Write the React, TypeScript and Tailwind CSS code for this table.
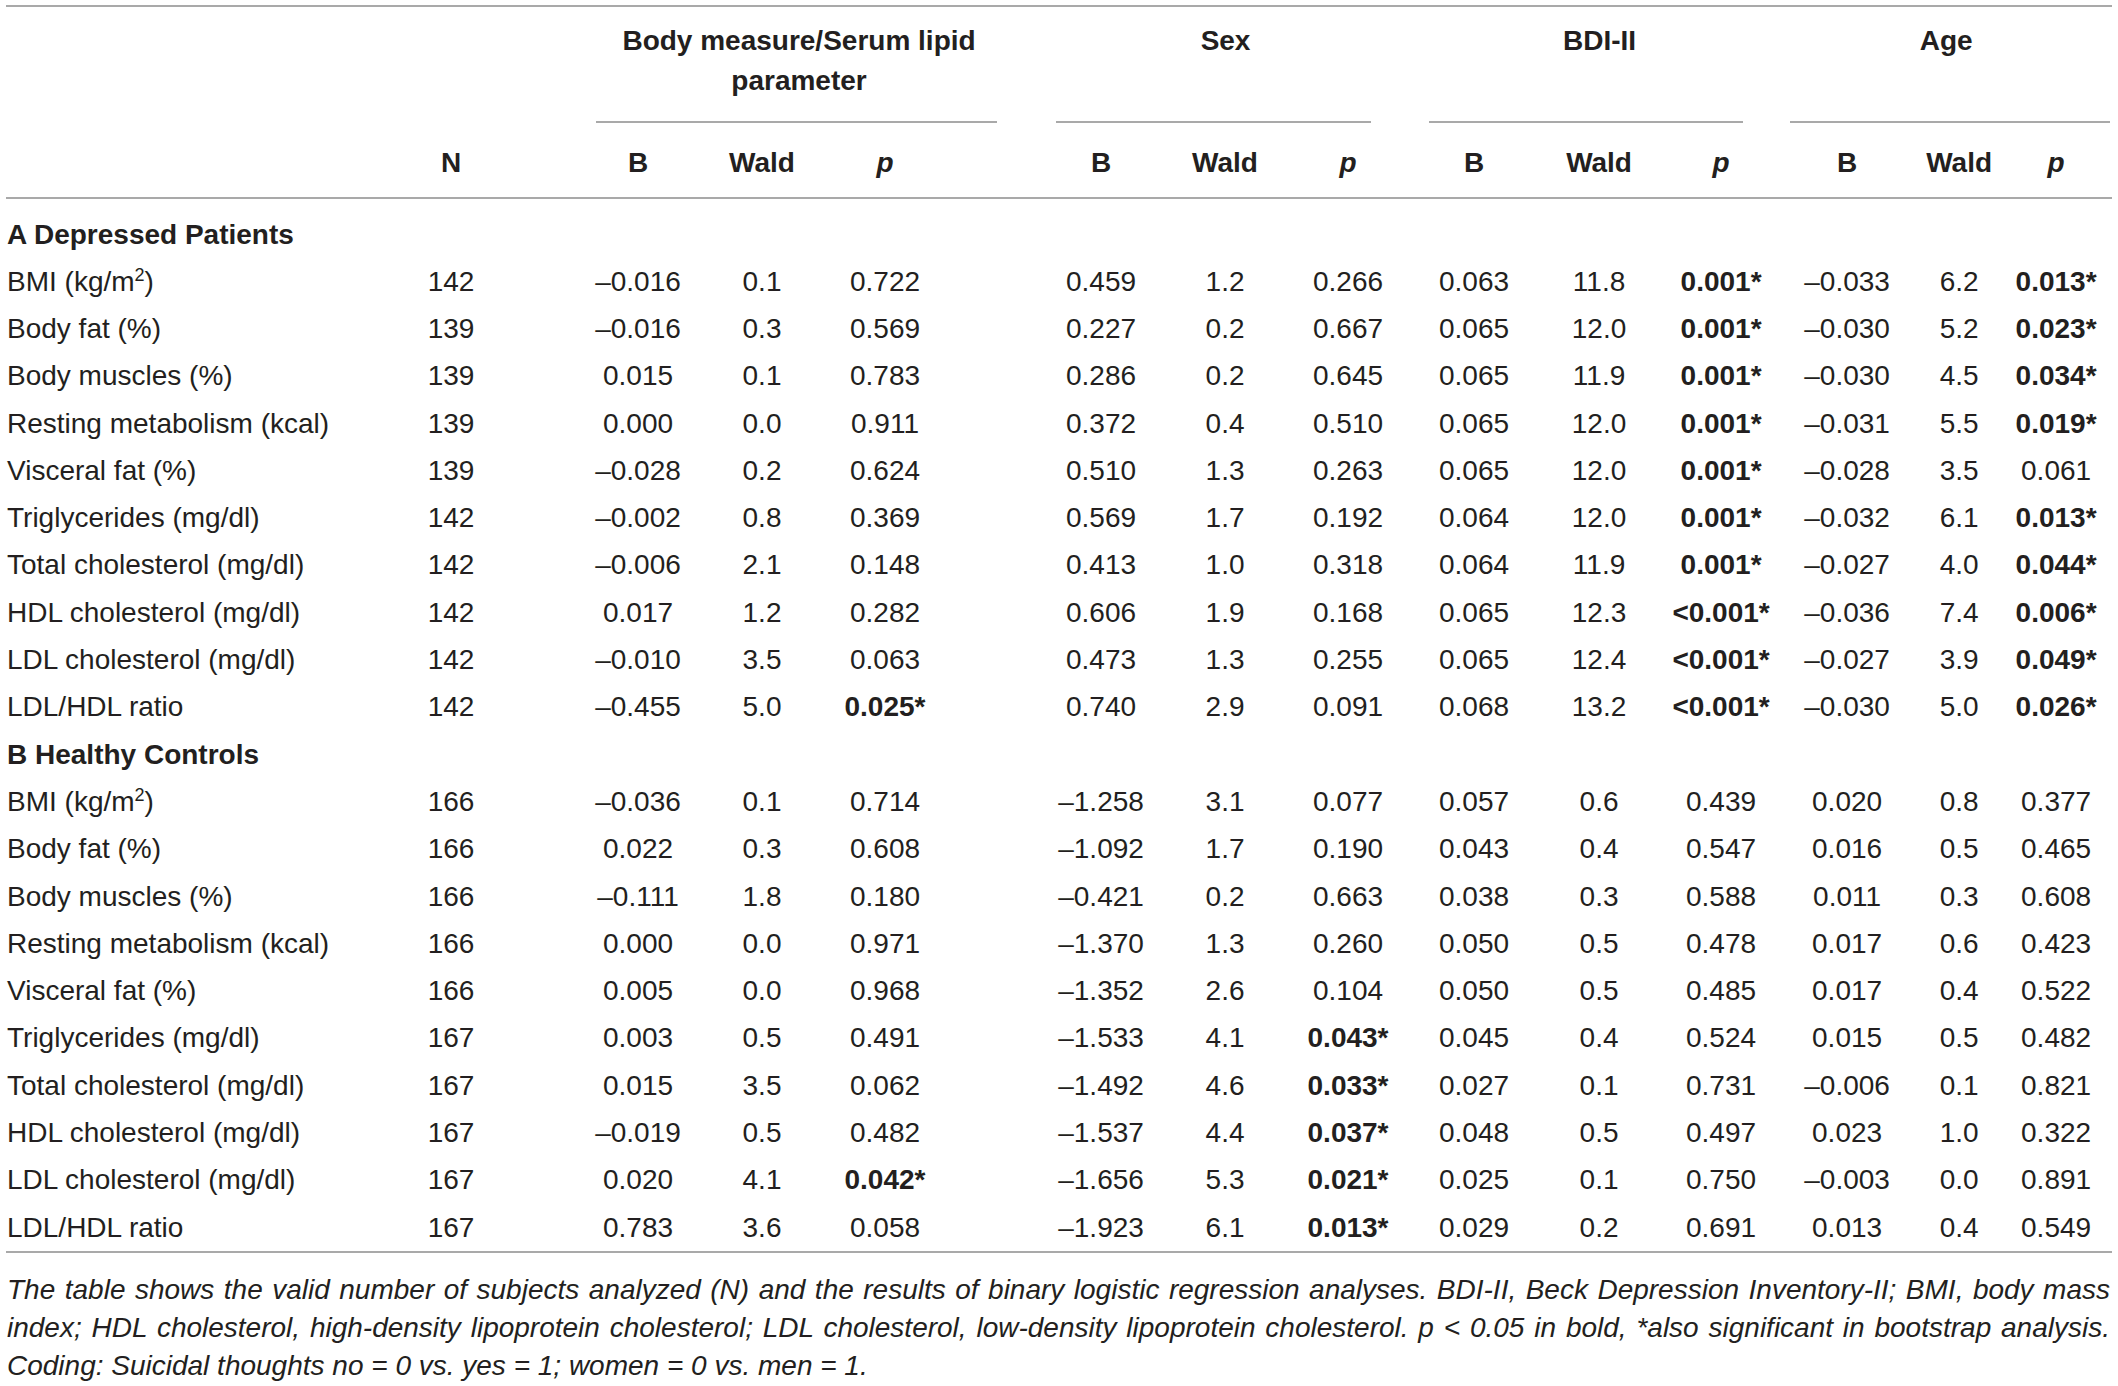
import React from 'react';

type Row = { label: React.ReactNode; n: string; v: string[] };

const bmi = (
  <>
    BMI (kg/m<sup className="text-[18px] -top-[10px]">2</sup>)
  </>
);

// "!" prefix marks a bold (significant) value
const groupA: Row[] = [
  { label: bmi, n: '142', v: ['–0.016', '0.1', '0.722', '0.459', '1.2', '0.266', '0.063', '11.8', '!0.001*', '–0.033', '6.2', '!0.013*'] },
  { label: 'Body fat (%)', n: '139', v: ['–0.016', '0.3', '0.569', '0.227', '0.2', '0.667', '0.065', '12.0', '!0.001*', '–0.030', '5.2', '!0.023*'] },
  { label: 'Body muscles (%)', n: '139', v: ['0.015', '0.1', '0.783', '0.286', '0.2', '0.645', '0.065', '11.9', '!0.001*', '–0.030', '4.5', '!0.034*'] },
  { label: 'Resting metabolism (kcal)', n: '139', v: ['0.000', '0.0', '0.911', '0.372', '0.4', '0.510', '0.065', '12.0', '!0.001*', '–0.031', '5.5', '!0.019*'] },
  { label: 'Visceral fat (%)', n: '139', v: ['–0.028', '0.2', '0.624', '0.510', '1.3', '0.263', '0.065', '12.0', '!0.001*', '–0.028', '3.5', '0.061'] },
  { label: 'Triglycerides (mg/dl)', n: '142', v: ['–0.002', '0.8', '0.369', '0.569', '1.7', '0.192', '0.064', '12.0', '!0.001*', '–0.032', '6.1', '!0.013*'] },
  { label: 'Total cholesterol (mg/dl)', n: '142', v: ['–0.006', '2.1', '0.148', '0.413', '1.0', '0.318', '0.064', '11.9', '!0.001*', '–0.027', '4.0', '!0.044*'] },
  { label: 'HDL cholesterol (mg/dl)', n: '142', v: ['0.017', '1.2', '0.282', '0.606', '1.9', '0.168', '0.065', '12.3', '!<0.001*', '–0.036', '7.4', '!0.006*'] },
  { label: 'LDL cholesterol (mg/dl)', n: '142', v: ['–0.010', '3.5', '0.063', '0.473', '1.3', '0.255', '0.065', '12.4', '!<0.001*', '–0.027', '3.9', '!0.049*'] },
  { label: 'LDL/HDL ratio', n: '142', v: ['–0.455', '5.0', '!0.025*', '0.740', '2.9', '0.091', '0.068', '13.2', '!<0.001*', '–0.030', '5.0', '!0.026*'] },
];

const groupB: Row[] = [
  { label: bmi, n: '166', v: ['–0.036', '0.1', '0.714', '–1.258', '3.1', '0.077', '0.057', '0.6', '0.439', '0.020', '0.8', '0.377'] },
  { label: 'Body fat (%)', n: '166', v: ['0.022', '0.3', '0.608', '–1.092', '1.7', '0.190', '0.043', '0.4', '0.547', '0.016', '0.5', '0.465'] },
  { label: 'Body muscles (%)', n: '166', v: ['–0.111', '1.8', '0.180', '–0.421', '0.2', '0.663', '0.038', '0.3', '0.588', '0.011', '0.3', '0.608'] },
  { label: 'Resting metabolism (kcal)', n: '166', v: ['0.000', '0.0', '0.971', '–1.370', '1.3', '0.260', '0.050', '0.5', '0.478', '0.017', '0.6', '0.423'] },
  { label: 'Visceral fat (%)', n: '166', v: ['0.005', '0.0', '0.968', '–1.352', '2.6', '0.104', '0.050', '0.5', '0.485', '0.017', '0.4', '0.522'] },
  { label: 'Triglycerides (mg/dl)', n: '167', v: ['0.003', '0.5', '0.491', '–1.533', '4.1', '!0.043*', '0.045', '0.4', '0.524', '0.015', '0.5', '0.482'] },
  { label: 'Total cholesterol (mg/dl)', n: '167', v: ['0.015', '3.5', '0.062', '–1.492', '4.6', '!0.033*', '0.027', '0.1', '0.731', '–0.006', '0.1', '0.821'] },
  { label: 'HDL cholesterol (mg/dl)', n: '167', v: ['–0.019', '0.5', '0.482', '–1.537', '4.4', '!0.037*', '0.048', '0.5', '0.497', '0.023', '1.0', '0.322'] },
  { label: 'LDL cholesterol (mg/dl)', n: '167', v: ['0.020', '4.1', '!0.042*', '–1.656', '5.3', '!0.021*', '0.025', '0.1', '0.750', '–0.003', '0.0', '0.891'] },
  { label: 'LDL/HDL ratio', n: '167', v: ['0.783', '3.6', '0.058', '–1.923', '6.1', '!0.013*', '0.029', '0.2', '0.691', '0.013', '0.4', '0.549'] },
];

function Val({ s }: { s: string }) {
  if (s.startsWith('!')) return <span className="font-bold">{s.slice(1)}</span>;
  return <>{s}</>;
}

function DataRow({ row }: { row: Row }) {
  const v = row.v;
  return (
    <tr className="h-[47.3px]">
      <td className="pl-[1px] whitespace-nowrap">{row.label}</td>
      <td className="text-center">{row.n}</td>
      <td />
      <td className="text-center"><Val s={v[0]} /></td>
      <td className="text-center"><Val s={v[1]} /></td>
      <td className="text-center"><Val s={v[2]} /></td>
      <td />
      <td className="text-center"><Val s={v[3]} /></td>
      <td className="text-center"><Val s={v[4]} /></td>
      <td className="text-center"><Val s={v[5]} /></td>
      <td />
      <td className="text-center"><Val s={v[6]} /></td>
      <td className="text-center"><Val s={v[7]} /></td>
      <td className="text-center whitespace-nowrap"><Val s={v[8]} /></td>
      <td />
      <td className="text-center"><Val s={v[9]} /></td>
      <td className="text-center"><Val s={v[10]} /></td>
      <td className="text-center"><Val s={v[11]} /></td>
      <td />
    </tr>
  );
}

function SubHead() {
  return (
    <>
      <th className="font-bold text-center pt-[5px]">B</th>
      <th className="font-bold text-center pt-[5px]">Wald</th>
      <th className="font-bold italic text-center pt-[5px]">p</th>
    </>
  );
}

export default function App() {
  return (
    <div className="w-[2118px] bg-white px-[6px] pt-[5px] font-['Liberation_Sans',Arial,sans-serif] text-[28px] leading-none text-[#231f20]">
      <table className="w-[2106px] table-fixed border-collapse">
        <colgroup>
          <col className="w-[374px]" />
          <col className="w-[142px]" />
          <col className="w-[64px]" />
          <col className="w-[104px]" />
          <col className="w-[144px]" />
          <col className="w-[102px]" />
          <col className="w-[110px]" />
          <col className="w-[110px]" />
          <col className="w-[138px]" />
          <col className="w-[108px]" />
          <col className="w-[17px]" />
          <col className="w-[110px]" />
          <col className="w-[140px]" />
          <col className="w-[104px]" />
          <col className="w-[7px]" />
          <col className="w-[134px]" />
          <col className="w-[90px]" />
          <col className="w-[104px]" />
          <col className="w-[4px]" />
        </colgroup>
        <thead>
          <tr className="border-t-2 border-[#a9a9a9] align-top">
            <th colSpan={3} />
            <th colSpan={4} className="p-0 font-bold">
              <div className="ml-[10px] mr-[49px] h-[116px] border-b-2 border-[#a9a9a9] pt-[14px] pl-[5px] leading-[40px]">
                Body measure/Serum lipid
                <br />
                parameter
              </div>
            </th>
            <th colSpan={4} className="p-0 font-bold">
              <div className="ml-[10px] mr-[48px] h-[116px] border-b-2 border-[#a9a9a9] pt-[14px] pl-[24px] leading-[40px]">Sex</div>
            </th>
            <th colSpan={4} className="p-0 font-bold">
              <div className="ml-[10px] mr-[37px] h-[116px] border-b-2 border-[#a9a9a9] pt-[14px] pl-[27px] leading-[40px]">BDI-II</div>
            </th>
            <th colSpan={4} className="p-0 font-bold">
              <div className="ml-[10px] mr-[2px] h-[116px] border-b-2 border-[#a9a9a9] pt-[14px] pr-[8px] leading-[40px]">Age</div>
            </th>
          </tr>
          <tr className="h-[75px] border-b-2 border-[#a9a9a9]">
            <th />
            <th className="font-bold text-center pt-[5px]">N</th>
            <th />
            <SubHead />
            <th />
            <SubHead />
            <th />
            <SubHead />
            <th />
            <SubHead />
            <th />
          </tr>
        </thead>
        <tbody>
          <tr className="h-[60px]">
            <td colSpan={19} className="pl-[1px] pt-[13px] font-bold">A Depressed Patients</td>
          </tr>
          {groupA.map((r, i) => (
            <DataRow key={'a' + i} row={r} />
          ))}
          <tr className="h-[47.3px]">
            <td colSpan={19} className="pl-[1px] font-bold">B Healthy Controls</td>
          </tr>
          {groupB.map((r, i) => (
            <DataRow key={'b' + i} row={r} />
          ))}
        </tbody>
      </table>
      <div className="border-t-2 border-[#a9a9a9] pt-[18px] pl-[1px] pr-[2px] italic leading-[37.8px] text-[#231f20]">
        <div className="text-justify [text-align-last:justify] whitespace-nowrap">
          The table shows the valid number of subjects analyzed (N) and the results of binary logistic regression analyses. BDI-II, Beck Depression Inventory-II; BMI, body mass
        </div>
        <div className="text-justify [text-align-last:justify] whitespace-nowrap">
          index; HDL cholesterol, high-density lipoprotein cholesterol; LDL cholesterol, low-density lipoprotein cholesterol. p &lt; 0.05 in bold, *also significant in bootstrap analysis.
        </div>
        <div className="whitespace-nowrap">Coding: Suicidal thoughts no = 0 vs. yes = 1; women = 0 vs. men = 1.</div>
      </div>
    </div>
  );
}
